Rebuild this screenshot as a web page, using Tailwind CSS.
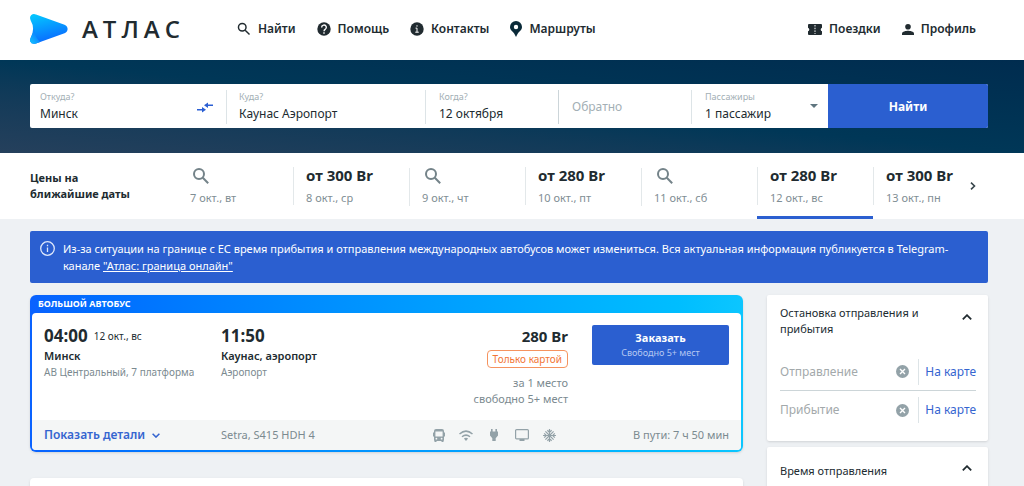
<!DOCTYPE html>
<html lang="ru">
<head>
  <meta charset="UTF-8" />
  <meta name="viewport" content="width=device-width, initial-scale=1.0" />
  <title>Атлас: Минск — Каунас Аэропорт</title>
  <script src="https://cdn.jsdelivr.net/npm/@tailwindcss/browser@4"></script>
</head>
<body class="min-h-screen overflow-x-hidden bg-[#eef1f4] font-['Noto_Sans',sans-serif] text-[11px] text-[#212b30]">

  <!-- Header -->
  <header class="flex h-15 items-center bg-white pr-12 pb-[2px] pl-[30px] text-xs font-semibold">
    <a href="#" class="flex items-center gap-[14px]" aria-label="Атлас">
      <svg class="h-[30px] w-[38px]" viewBox="0 0 38 30">
        <defs>
          <linearGradient id="logo" x1="0.3" y1="0" x2="0.6" y2="1">
            <stop offset="0" stop-color="#04c4ff" />
            <stop offset="1" stop-color="#0a62ff" />
          </linearGradient>
          <linearGradient id="tail" x1="0" y1="1" x2="0.8" y2="0">
            <stop offset="0" stop-color="#12c8ff" />
            <stop offset="1" stop-color="#0a62ff" />
          </linearGradient>
        </defs>
        <path d="M6 .5 34.500 10.800Q37.600 12.200 37.600 15T34.500 19.200L6 29.500Q1.500 30.800.3 27.500-.3 25.800.7 23.800 5.500 14.500.6 6.200-.8 3 1.300 1.100 3.200-.5 6 .5Z" fill="url(#logo)" />
        <path d="M4 14Q3.800 18 .7 23.800-.3 25.800.3 27.500 1.500 30.800 6 29.500L10 28Q4.500 22.500 4 14Z" fill="url(#tail)" />
      </svg>
      <span class="font-['Open_Sans',sans-serif] text-2xl leading-none font-semibold tracking-[5px]">АТЛАС</span>
    </a>
    <nav class="ml-[52px] flex grow items-center gap-[21px]">
      <a href="#" class="flex items-center gap-[7px]">
        <svg class="size-[14px]" viewBox="0 0 24 24" fill="none" stroke="currentColor" stroke-width="2.500"><circle cx="9" cy="9" r="6.500" /><path d="m14 14 7.500 7.500" /></svg>
        Найти
      </a>
      <a href="#" class="flex items-center gap-[7px]">
        <svg class="size-[14px]" viewBox="0 0 24 24"><circle cx="12" cy="12" r="11.500" fill="currentColor" /><path d="M8 9.500a4 4 0 1 1 6 3.200c-1.400 1-1.900 1.400-1.900 3M12 17.500v2.500" fill="none" stroke="#fff" stroke-width="2.400" /></svg>
        Помощь
      </a>
      <a href="#" class="flex items-center gap-[7px]">
        <svg class="size-[14px]" viewBox="0 0 24 24"><circle cx="12" cy="12" r="11.500" fill="currentColor" /><path d="M12 5.500v2.500M9.500 10.500H12v7M9 17.500h6" fill="none" stroke="#fff" stroke-width="1.700" /></svg>
        Контакты
      </a>
      <a href="#" class="flex items-center gap-[7px]">
        <svg class="h-4 w-3" viewBox="0 0 12 16"><path fill="#0a2a38" fill-rule="evenodd" d="M6 0a6 6 0 0 1 6 6c0 3-2.500 4.300-4 6.200-.8 1-1.200 2.300-2 3.800-.8-1.500-1.200-2.800-2-3.800C2.500 10.300 0 9 0 6a6 6 0 0 1 6-6Zm0 3.800a2.200 2.200 0 1 0 0 4.400 2.200 2.200 0 0 0 0-4.400Z" /></svg>
        Маршруты
      </a>
      <a href="#" class="ml-auto flex items-center gap-[7px]">
        <svg class="h-[11px] w-[14px]" viewBox="0 0 14 11"><path fill="currentColor" d="M1 0h12q1 0 1 1v2.700a1.900 1.900 0 0 0 0 3.600V10q0 1-1 1H1q-1 0-1-1V7.300a1.900 1.900 0 0 0 0-3.600V1q0-1 1-1Z" /><path d="M7 1v9" stroke="#fff" stroke-width="1" stroke-dasharray="1.500 1.200" /></svg>
        Поездки
      </a>
      <a href="#" class="flex items-center gap-[7px]">
        <svg class="h-[11px] w-3" viewBox="0 0 12 11" fill="currentColor"><circle cx="6" cy="2.800" r="2.800" /><path d="M0 11V9.500C0 7.500 4 6.700 6 6.700s6 .8 6 2.800V11Z" /></svg>
        Профиль
      </a>
    </nav>
  </header>

  <!-- Search -->
  <section class="bg-linear-to-bl from-[#002c4f] via-[#003757] to-[#25405c] pt-6 pr-9 pb-[25px] pl-[30px]">
    <form class="grid h-11 grid-cols-[197fr_199fr_133fr_133fr_136fr_160fr] overflow-hidden rounded-xs bg-white text-xs">
      <div class="my-[6px] flex items-center border-r border-[#dde4e7] pr-[13px] pl-[10px]">
        <div class="min-w-0 grow">
          <label for="from" class="block text-[9px] leading-[14px] text-[#a3afb5]">Откуда?</label>
          <input id="from" type="text" value="Минск" class="block w-full leading-5 outline-none" />
        </div>
        <button type="button" aria-label="Поменять местами">
          <svg class="h-[11px] w-4" viewBox="0 0 16 11" fill="none" stroke="#2b5fd3" stroke-width="1.500"><path d="M0 7.800h7M16 3.200H9" /><path d="M5 5l4 2.800-4 2.800ZM11 .4 7 3.200 11 6Z" fill="#2b5fd3" stroke="none" /></svg>
        </button>
      </div>
      <div class="my-[6px] border-r border-[#dde4e7] px-3">
        <label for="to" class="block text-[9px] leading-[14px] text-[#a3afb5]">Куда?</label>
        <input id="to" type="text" value="Каунас Аэропорт" class="block w-full leading-5 outline-none" />
      </div>
      <div class="my-[6px] border-r border-[#ccd5d9] px-[13px]">
        <label for="when" class="block text-[9px] leading-[14px] text-[#a3afb5]">Когда?</label>
        <input id="when" type="text" value="12 октября" class="block w-full leading-5 outline-none" />
      </div>
      <div class="my-[6px] flex items-center border-r border-[#dde4e7] px-[13px]">
        <input type="text" placeholder="Обратно" aria-label="Обратно" class="block w-full leading-5 outline-none placeholder:text-[#a3afb5]" />
      </div>
      <div class="relative my-[6px] px-[13px]">
        <label for="passengers" class="block text-[9px] leading-[14px] text-[#a3afb5]">Пассажиры</label>
        <select id="passengers" class="block w-full appearance-none leading-5 outline-none">
          <option>1 пассажир</option>
          <option>2 пассажира</option>
        </select>
        <svg class="pointer-events-none absolute top-[14px] right-[10px] h-1 w-2" viewBox="0 0 8 4"><path d="M0 0h8L4 4Z" fill="#5f757f" /></svg>
      </div>
      <button type="submit" class="bg-[#2b5fd0] font-bold text-white">Найти</button>
    </form>
  </section>

  <!-- Nearest dates -->
  <section class="flex h-[66px] bg-white pr-9 pl-[30px]">
    <h2 class="flex w-[147px] shrink-0 items-center leading-4 font-bold">Цены на<br />ближайшие даты</h2>
    <div class="grid grow grid-cols-[116fr_116fr_116fr_116fr_116fr_116fr_84fr] leading-4 text-[#7f8e94]">
      <a href="#" class="pt-[14px]">
        <span class="block h-[38px] pl-[13px]"><svg class="mt-[1px] mb-[6px] ml-[3px] block size-4" viewBox="0 0 16 16" fill="none" stroke="#748389" stroke-width="2"><circle cx="6" cy="6" r="5" /><path d="m9.800 9.800 5.400 5.400" /></svg>7 окт., вт</span>
      </a>
      <a href="#" class="pt-[14px]">
        <span class="block h-[38px] border-l border-[#e3e8ea] pl-3"><b class="block text-[15px] leading-[17px] text-[#212b30]">от 300 Br</b><span class="mt-[6px] block">8 окт., ср</span></span>
      </a>
      <a href="#" class="pt-[14px]">
        <span class="block h-[38px] border-l border-[#e3e8ea] pl-3"><svg class="mt-[1px] mb-[6px] ml-[3px] block size-4" viewBox="0 0 16 16" fill="none" stroke="#748389" stroke-width="2"><circle cx="6" cy="6" r="5" /><path d="m9.800 9.800 5.400 5.400" /></svg>9 окт., чт</span>
      </a>
      <a href="#" class="pt-[14px]">
        <span class="block h-[38px] border-l border-[#e3e8ea] pl-3"><b class="block text-[15px] leading-[17px] text-[#212b30]">от 280 Br</b><span class="mt-[6px] block">10 окт., пт</span></span>
      </a>
      <a href="#" class="pt-[14px]">
        <span class="block h-[38px] border-l border-[#e3e8ea] pl-3"><svg class="mt-[1px] mb-[6px] ml-[3px] block size-4" viewBox="0 0 16 16" fill="none" stroke="#748389" stroke-width="2"><circle cx="6" cy="6" r="5" /><path d="m9.800 9.800 5.400 5.400" /></svg>11 окт., сб</span>
      </a>
      <a href="#" class="border-b-3 border-[#2b5fd0] pt-[14px]">
        <span class="block h-[38px] border-l border-[#e3e8ea] pl-3"><b class="block text-[15px] leading-[17px] text-[#212b30]">от 280 Br</b><span class="mt-[6px] block">12 окт., вс</span></span>
      </a>
      <a href="#" class="pt-[14px]">
        <span class="block h-[38px] border-l border-[#e3e8ea] pl-3 whitespace-nowrap"><b class="block text-[15px] leading-[17px] text-[#212b30]">от 300 Br</b><span class="mt-[6px] block">13 окт., пн</span></span>
      </a>
    </div>
    <button type="button" aria-label="Следующие даты" class="flex w-[31px] shrink-0 items-center justify-center">
      <svg class="h-2 w-[6px]" viewBox="0 0 6 8" fill="none" stroke="#37454b" stroke-width="1.600"><path d="m1 .6 3.500 3.400L1 7.400" /></svg>
    </button>
  </section>

  <main class="pt-3 pr-9 pl-[30px]">
    <div class="flex gap-2 rounded-xs bg-[#2b5fd0] py-[9px] pr-6 pl-[10px] leading-[17px] text-white">
      <svg class="mt-[1px] size-[15px] shrink-0" viewBox="0 0 15 15" fill="none" stroke="#dfe8fb" stroke-width="1.300"><circle cx="7.500" cy="7.500" r="6.800" /><path d="M7.500 3.800v1.500M7.500 6.500V11" /></svg>
      <p>Из-за ситуации на границе с ЕС время прибытия и отправления международных автобусов может измениться. Вся актуальная информация публикуется в Telegram-канале <a href="#" class="underline">"Атлас: граница онлайн"</a></p>
    </div>

    <div class="mt-3 flex items-start gap-6">
      <div class="min-w-0 grow">
        <!-- Trip -->
        <article class="rounded-md bg-linear-to-r from-[#0a62ff] to-[#0cc6ff] px-[2px] pb-[2px] shadow-sm">
          <h3 class="pl-[6px] text-[9px] leading-[18px] font-bold text-white">БОЛЬШОЙ АВТОБУС</h3>
          <div class="overflow-hidden rounded-sm bg-white">
            <div class="flex h-[107px] px-3 pt-3">
              <div class="w-[177px] shrink-0">
                <p class="flex items-center gap-[6px] leading-[22px]"><b class="text-[17px]">04:00</b><span class="text-[10px]">12 окт., вс</span></p>
                <p class="leading-[17px] font-semibold">Минск</p>
                <p class="text-[10px] leading-[17px] text-[#7b8a90]">АВ Центральный, 7 платформа</p>
              </div>
              <div class="grow">
                <p class="text-[17px] leading-[22px] font-bold">11:50</p>
                <p class="leading-[17px] font-semibold">Каунас, аэропорт</p>
                <p class="text-[10px] leading-[17px] text-[#7b8a90]">Аэропорт</p>
              </div>
              <div class="flex flex-col items-end leading-4 text-[#7b8a90]">
                <b class="text-[15px] leading-[22px] text-[#212b30]">280 Br</b>
                <span class="mt-[3px] mb-[7px] rounded-sm border border-[#f5935f] px-[5px] text-[10px] text-[#f27535]">Только картой</span>
                <span>за 1 место</span>
                <span>свободно 5+ мест</span>
              </div>
              <button type="button" class="ml-6 h-10 w-[137px] shrink-0 rounded-xs bg-[#2b5fd0] text-white">
                <span class="block leading-4 font-bold">Заказать</span>
                <span class="block text-[9px] leading-[14px] text-[#b5c8f2]">Свободно 5+ мест</span>
              </button>
            </div>
            <div class="flex h-[30px] items-center bg-[#f4f6f6] px-3 text-[#7b8a90]">
              <div class="w-[177px] shrink-0">
                <button type="button" class="flex items-center gap-[7px] text-xs font-semibold text-[#3565d0]">
                  Показать детали
                  <svg class="h-[5px] w-2" viewBox="0 0 8 5" fill="none" stroke="currentColor" stroke-width="1.500"><path d="m.6.700 3.400 3.400L7.400.7" /></svg>
                </button>
              </div>
              <span class="grow">Setra, S415 HDH 4</span>
              <div class="mr-[77px] flex items-center gap-[14px] text-[#93a2a8]">
                <svg class="h-[13px] w-3" viewBox="0 0 12 13" fill="currentColor"><path fill-rule="evenodd" d="M3 0h6q2 0 2 2v1.500h1v4h-1v3.500q0 .7-.5 1V13H8.500v-1h-5v1H1.500v-1q-.5-.3-.5-1V7.500H0v-4h1V2q0-2 2-2Zm-.6 2.500v5h7.200v-5Zm1 6.300a.9.900 0 1 0 0 1.800.9.900 0 0 0 0-1.800Zm5.200 0a.9.900 0 1 0 0 1.800.9.900 0 0 0 0-1.800Z" /></svg>
                <svg class="h-[11px] w-[14px]" viewBox="0 0 14 11" fill="none" stroke="currentColor" stroke-width="1.500"><path d="M.5 4Q7-1.800 13.500 4M3 6.800q4-3.400 8 0" /><path d="M4.900 8.500q2.100-1.500 4.200 0L7 11Z" fill="currentColor" stroke="none" /></svg>
                <svg class="h-3 w-[14px]" viewBox="0 0 14 12" fill="currentColor"><path d="M4 0h1.600v2.500h2.800V0H10v2.500h1v4L8.700 9.200V12H5.300V9.200L3 6.500v-4h1Z" /></svg>
                <svg class="h-3 w-[14px]" viewBox="0 0 14 12"><rect x=".6" y=".6" width="12.800" height="9.300" rx="1" fill="none" stroke="currentColor" stroke-width="1.200" /><path d="M4.500 10h5v2h-5Z" fill="currentColor" /></svg>
                <svg class="size-[13px]" viewBox="0 0 14 14" fill="none" stroke="currentColor" stroke-width="1.300"><path d="M7 0v14M4.700 1.300 7 3.600l2.300-2.300M4.700 12.700 7 10.400l2.300 2.300M0 7h14M1.300 4.700 3.600 7 1.300 9.300M12.700 4.700 10.400 7l2.300 2.300M2.600 2.600l8.800 8.800M11.400 2.600l-8.800 8.800" /></svg>
              </div>
              <span>В пути: 7 ч 50 мин</span>
            </div>
          </div>
        </article>

        <article class="mt-[26px] h-40 rounded-sm bg-white shadow-sm"></article>
      </div>

      <!-- Filters -->
      <aside class="w-[221px] shrink-0 space-y-[6px]">
        <section class="rounded-xs bg-white pt-[10px] pr-3 pb-3 pl-[13px] shadow-sm">
          <button type="button" class="flex w-full items-center justify-between pr-1 text-left leading-4">
            <span>Остановка отправления и<br />прибытия</span>
            <svg class="mb-2 h-[6px] w-[10px]" viewBox="0 0 10 6" fill="none" stroke="currentColor" stroke-width="1.800"><path d="M.8 5.300 5 1.200l4.200 4.100" /></svg>
          </button>
          <div class="mt-4 flex h-[38px] items-center border-b border-[#ccd5d8] text-xs">
            <input type="text" placeholder="Отправление" aria-label="Отправление" class="w-0 grow outline-none placeholder:text-[#a3a9ab]" />
            <button type="button" aria-label="Очистить отправление"><svg class="size-[13px]" viewBox="0 0 13 13"><circle cx="6.500" cy="6.500" r="6.500" fill="#93a2a8" /><path d="m4 4 5 5M9 4 4 9" stroke="#fff" stroke-width="1.400" /></svg></button>
            <a href="#" class="ml-[9px] flex h-[26px] items-center border-l border-[#dde4e7] pl-[6px] whitespace-nowrap text-[#3565d0]">На карте</a>
          </div>
          <div class="flex h-[38px] items-center text-xs">
            <input type="text" placeholder="Прибытие" aria-label="Прибытие" class="w-0 grow outline-none placeholder:text-[#a3a9ab]" />
            <button type="button" aria-label="Очистить прибытие"><svg class="size-[13px]" viewBox="0 0 13 13"><circle cx="6.500" cy="6.500" r="6.500" fill="#93a2a8" /><path d="m4 4 5 5M9 4 4 9" stroke="#fff" stroke-width="1.400" /></svg></button>
            <a href="#" class="ml-[9px] flex h-[26px] items-center border-l border-[#dde4e7] pl-[6px] whitespace-nowrap text-[#3565d0]">На карте</a>
          </div>
        </section>
        <section class="h-40 rounded-xs bg-white pt-4 pr-3 pl-[13px] shadow-sm">
          <button type="button" class="flex w-full items-center justify-between pr-1 text-left leading-4">
            <span>Время отправления</span>
            <svg class="mb-[6px] h-[6px] w-[10px]" viewBox="0 0 10 6" fill="none" stroke="currentColor" stroke-width="1.800"><path d="M.8 5.300 5 1.200l4.200 4.100" /></svg>
          </button>
        </section>
      </aside>
    </div>
  </main>
</body>
</html>
